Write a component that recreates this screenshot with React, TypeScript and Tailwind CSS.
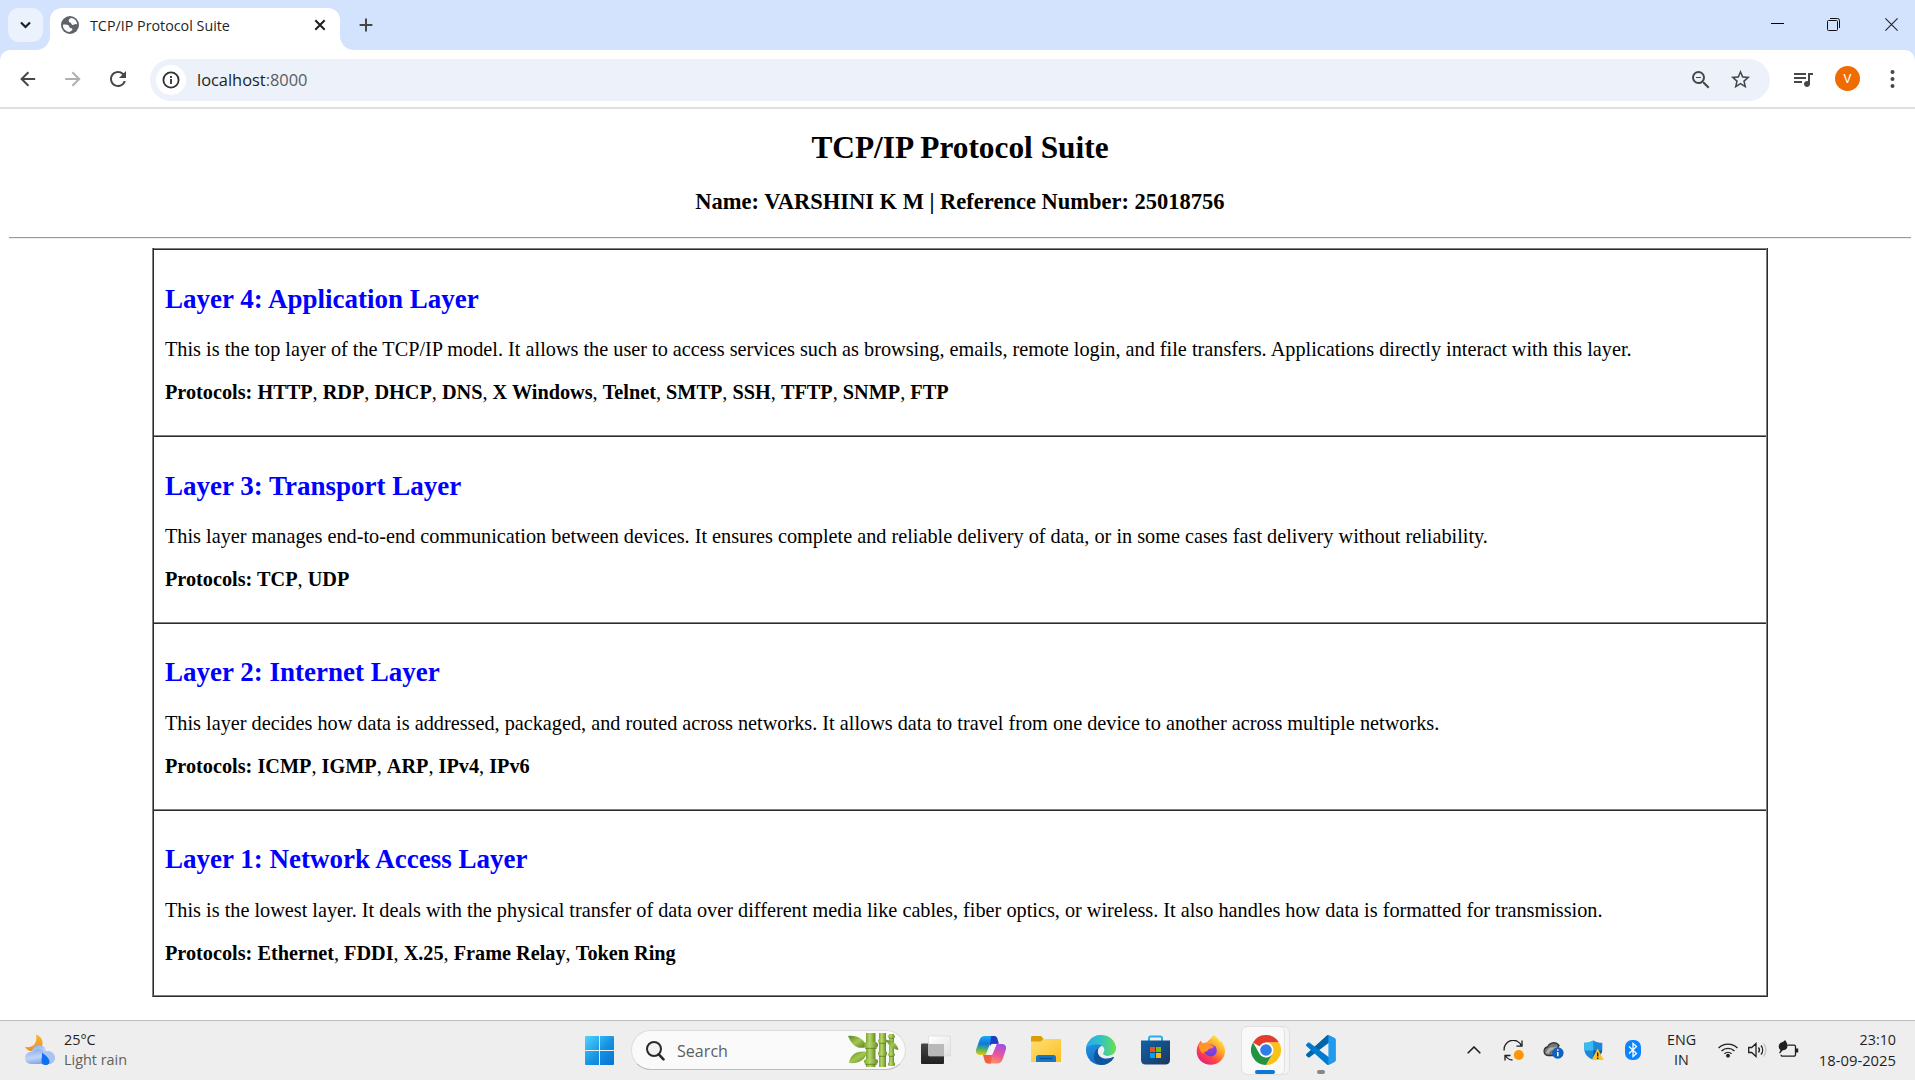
import React from "react";
import { MdQueueMusic, MdRefresh, MdStarBorder, MdZoomOut } from "react-icons/md";

const layers = [
  {
    title: "Layer 4: Application Layer",
    text: "This is the top layer of the TCP/IP model. It allows the user to access services such as browsing, emails, remote login, and file transfers. Applications directly interact with this layer.",
    protocols: ["HTTP", "RDP", "DHCP", "DNS", "X Windows", "Telnet", "SMTP", "SSH", "TFTP", "SNMP", "FTP"],
    size: "h-[187px]",
    heading: "pt-[34px] pb-[23px]",
  },
  {
    title: "Layer 3: Transport Layer",
    text: "This layer manages end-to-end communication between devices. It ensures complete and reliable delivery of data, or in some cases fast delivery without reliability.",
    protocols: ["TCP", "UDP"],
    size: "h-[187px]",
    heading: "pt-[34px] pb-[23px]",
  },
  {
    title: "Layer 2: Internet Layer",
    text: "This layer decides how data is addressed, packaged, and routed across networks. It allows data to travel from one device to another across multiple networks.",
    protocols: ["ICMP", "IGMP", "ARP", "IPv4", "IPv6"],
    size: "h-[187px]",
    heading: "pt-[33px] pb-[24px]",
  },
  {
    title: "Layer 1: Network Access Layer",
    text: "This is the lowest layer. It deals with the physical transfer of data over different media like cables, fiber optics, or wireless. It also handles how data is formatted for transmission.",
    protocols: ["Ethernet", "FDDI", "X.25", "Frame Relay", "Token Ring"],
    size: "h-[186px]",
    heading: "pt-[33px] pb-[24px]",
  },
];

function TabStrip() {
  return (
    <div className="flex h-[50px] items-start bg-[#d3e3fd]">
      <div className="ml-2 mt-2 flex h-[34px] w-[35px] items-center justify-center rounded-[11px] bg-[#ebf2fe]">
        <svg width="11" height="8" viewBox="0 0 11 8" fill="none" stroke="#1f1f1f" strokeWidth="2.2">
          <path d="M1 1.5 5.5 6 10 1.5" />
        </svg>
      </div>
      <div className="relative ml-[7px] mt-2 flex h-[42px] w-[290px] items-center rounded-t-[12px] bg-white pb-2 pl-[11px] pr-[14px]">
        <svg className="absolute bottom-0 left-[-14px]" width="14" height="14" viewBox="0 0 14 14">
          <path d="M14 0v14H0A14 14 0 0 0 14 0Z" fill="#fff" />
        </svg>
        <svg className="absolute bottom-0 right-[-14px]" width="14" height="14" viewBox="0 0 14 14">
          <path d="M0 0v14h14A14 14 0 0 1 0 0Z" fill="#fff" />
        </svg>
        <svg width="18" height="18" viewBox="0 0 18 18">
          <circle cx="9" cy="9" r="9" fill="#5f6368" />
          <path
            d="M10.8 1.900C8.800 2.200 7.600 3.200 7.700 4.800c.1 1.500 1.500 1.600 2.200 2.200.8.8.6 2 1.900 2 1.400 0 1.600-1 2.700-1 .9 0 1.300.6 1.700.8A7.300 7.300 0 0 0 10.800 1.900ZM1.800 8.700c2.200-.4 4.400-.3 5.600.5 1.200.9.5 2.400 1.900 2.700 1.200.2 2.200.2 2.100 1.500-.1 1.200-1.500 1.300-2.700 2.700A7.200 7.200 0 0 1 1.800 8.700Z"
            fill="#fff"
          />
        </svg>
        <span className="ml-[11px] pt-px text-[14.3px] leading-5 text-[#1f1f1f]">TCP/IP Protocol Suite</span>
        <svg className="ml-auto" width="12" height="12" viewBox="0 0 12 12" stroke="#1f1f1f" strokeWidth="2">
          <path d="m1.3 1.3 9.4 9.4m0-9.4-9.4 9.4" />
        </svg>
      </div>
      <svg className="ml-[19px] mt-[18px]" width="14" height="14" viewBox="0 0 14 14" stroke="#474747" strokeWidth="2">
        <path d="M7 .6v12.8M.6 7h12.8" />
      </svg>
      <div className="ml-auto flex items-center pt-[18px]">
        <svg width="13" height="13" viewBox="0 0 13 13" stroke="#000" strokeWidth="1">
          <path d="M0 5.5h13" />
        </svg>
        <svg className="ml-[43px]" width="13" height="13" viewBox="0 0 13 13" fill="none" stroke="#111" strokeWidth="1">
          <rect x=".5" y="2.5" width="10" height="10" rx="1" />
          <path d="M3 .5h7.5a2 2 0 0 1 2 2V10" />
        </svg>
        <svg className="ml-[45px] mr-[17px]" width="13" height="13" viewBox="0 0 13 13" stroke="#222" strokeWidth="1.1">
          <path d="m.4.4 12.2 12.2m0-12.2L.4 12.6" />
        </svg>
      </div>
    </div>
  );
}

function Toolbar() {
  return (
    <div className="bg-[#d3e3fd]">
      <div className="flex h-[57px] items-center rounded-t-[10px] bg-white">
        <svg className="ml-5" width="16" height="16" viewBox="0 0 16 16" fill="none" stroke="#474747" strokeWidth="2">
          <path d="M15.2 8H2M8.4 1.2 1.6 8l6.8 6.8" />
        </svg>
        <svg className="ml-[29px]" width="16" height="16" viewBox="0 0 16 16" fill="none" stroke="#b0b0b0" strokeWidth="2">
          <path d="M.2 8h13.6M7.4 1.2 14.2 8l-6.8 6.8" />
        </svg>
        <MdRefresh className="ml-[25px] size-6 text-[#474747]" />
        <div className="ml-5 mt-[2px] flex h-[42px] w-[1620px] items-center rounded-full bg-[#ecf1fa]">
          <div className="ml-[6px] flex size-[30px] items-center justify-center rounded-full bg-white">
            <svg width="18" height="18" viewBox="0 0 18 18" fill="none" stroke="#303030" strokeWidth="1.8">
              <circle cx="9" cy="9" r="7.6" />
              <path d="M9 8v5M9 5v1.9" />
            </svg>
          </div>
          <span className="ml-[11px] text-[16.4px] leading-6 text-[#1f1f1f]">
            localhost<span className="text-[#5a5d61]">:8000</span>
          </span>
          <MdZoomOut className="ml-auto size-6 text-[#474747]" />
          <MdStarBorder className="ml-4 mr-[18px] size-[23px] text-[#474747]" />
        </div>
        <MdQueueMusic className="ml-[21px] size-6 text-[#474747]" />
        <div className="ml-5 flex size-[25px] items-center justify-center rounded-full bg-[#ef6c00] font-[Roboto] text-[13px] text-white">
          V
        </div>
        <svg className="ml-[30px]" width="5" height="18" viewBox="0 0 5 18" fill="#474747">
          <circle cx="2.5" cy="2" r="2" />
          <circle cx="2.5" cy="9" r="2" />
          <circle cx="2.5" cy="16" r="2" />
        </svg>
      </div>
      <div className="h-[2px] bg-[#e0e0e0]" />
    </div>
  );
}

function Page() {
  return (
    <div className="h-[911px] bg-white pl-[9px] pr-1 pt-[21px] font-['Liberation_Serif',serif] text-black">
      <h1 className="text-center text-[31.35px] font-bold leading-9">TCP/IP Protocol Suite</h1>
      <h2 className="mt-[23px] text-center text-[22.5px] font-bold leading-[26px]">
        Name: VARSHINI K M | Reference Number: 25018756
      </h2>
      <div className="mt-[22px] border-b border-t border-b-[#eeeeee] border-t-[#9a9a9a]" />
      <div className="mx-auto mt-[9px] w-[1616px] border-b border-l border-r border-b-[#2b2b2b] border-l-[#808080] border-r-[#2b2b2b]">
        <div className="border-b border-l border-r border-b-[#808080] border-l-[#2b2b2b] border-r-[#808080]">
          {layers.map((layer) => (
            <section key={layer.title} className={`border-t border-t-[#808080] ${layer.size}`}>
              <div className="border-t border-t-[#2b2b2b] pl-[11px]">
                <h3 className={`text-[27px] font-bold leading-[30px] text-[#0000ff] ${layer.heading}`}>{layer.title}</h3>
                <p className="whitespace-nowrap text-[20.25px] leading-6">{layer.text}</p>
                <p className="mt-[19px] text-[20.25px] leading-6">
                  <b>Protocols: </b>
                  {layer.protocols.map((name, i) => (
                    <React.Fragment key={name}>
                      {i > 0 && ", "}
                      <b>{name}</b>
                    </React.Fragment>
                  ))}
                </p>
              </div>
            </section>
          ))}
        </div>
      </div>
    </div>
  );
}

function WeatherIcon() {
  return (
    <svg width="32" height="32" viewBox="0 0 32 32">
      <defs>
        <linearGradient id="moon" x1="0" y1="0" x2="0" y2="1">
          <stop offset="0" stopColor="#f4b93a" />
          <stop offset="1" stopColor="#ee8b1c" />
        </linearGradient>
        <linearGradient id="cloud" x1="0" y1="0" x2="0.3" y2="1">
          <stop offset="0" stopColor="#7fa6ec" />
          <stop offset=".6" stopColor="#c3d6f7" />
          <stop offset="1" stopColor="#86a9ea" />
        </linearGradient>
      </defs>
      <path d="M12 .5c4.500 1.500 7 5 6.500 9.500s-4 7.500-8.500 7.500c-4.500 0-7.500-2-9-4.500 5 .5 8-.5 9.700-3C12.500 7 12.600 4 12 .5Z" fill="url(#moon)" />
      <circle cx="15" cy="18" r="7.200" fill="url(#cloud)" />
      <path d="M7 30a6 6 0 1 1 1.500-11.800A8 8 0 0 1 21 18a6.500 6.500 0 1 1 3 12Z" fill="url(#cloud)" />
      <circle cx="25" cy="23.500" r="5.800" fill="#a9c3f3" />
      <path d="M18 18.500c4 3 7.500 6 7.500 9.200 0 2.500-1.700 3.300-4 3.300s-4-1-4-3.500c0-3 .8-5.500.5-9Z" fill="#0f6ff0" />
    </svg>
  );
}

function StartIcon() {
  return (
    <svg width="29" height="29" viewBox="0 0 29 29">
      <defs>
        <linearGradient id="win" x1="0" y1="0" x2="1" y2="1">
          <stop offset="0" stopColor="#4fd4ff" />
          <stop offset=".55" stopColor="#1691e0" />
          <stop offset="1" stopColor="#0572d4" />
        </linearGradient>
      </defs>
      <path d="M1 0h13v14H0V1a1 1 0 0 1 1-1ZM15 0h13a1 1 0 0 1 1 1v13H15ZM0 15h14v14H1a1 1 0 0 1-1-1ZM15 15h14v13a1 1 0 0 1-1 1H15Z" fill="url(#win)" />
    </svg>
  );
}

function BambooIcon() {
  return (
    <svg width="51" height="34" viewBox="0 0 51 34">
      <defs>
        <linearGradient id="stalk" x1="0" y1="0" x2="1" y2="0">
          <stop offset="0" stopColor="#7fa732" />
          <stop offset=".4" stopColor="#b9d76a" />
          <stop offset="1" stopColor="#648c25" />
        </linearGradient>
        <linearGradient id="leaf" x1="0" y1="0" x2="1" y2="1">
          <stop offset="0" stopColor="#5c8822" />
          <stop offset=".5" stopColor="#a3c750" />
          <stop offset="1" stopColor="#55801f" />
        </linearGradient>
      </defs>
      <path d="M0 3C9 2 17 6 18 14 9 17 4 12 0 3Z" fill="url(#leaf)" />
      <path d="M1 30c1-8 8-13 18-11-1 8-9 12-18 11Z" fill="url(#leaf)" />
      <path d="M18 0h9.500v34H18z" fill="url(#stalk)" />
      <path d="M31 0h7v34h-7z" fill="url(#stalk)" />
      <path d="M41 1h5v32h-5z" fill="url(#stalk)" />
      <rect x="16" y="9" width="14" height="6" rx="3" fill="url(#stalk)" />
      <rect x="16" y="26" width="14" height="5" rx="2.500" fill="url(#stalk)" />
      <rect x="30" y="6" width="9" height="4" rx="2" fill="url(#stalk)" />
      <rect x="30" y="18" width="9" height="5" rx="2" fill="url(#stalk)" />
      <rect x="40" y="2" width="7" height="3" rx="1.500" fill="url(#stalk)" />
      <rect x="40" y="20" width="7" height="3" rx="1.500" fill="url(#stalk)" />
      <rect x="40" y="29" width="7" height="4" rx="1.500" fill="url(#stalk)" />
      <path d="M17 15.300h12M17 31.300h12M31 10.300h7M31 23.300h7M41 5.300h5M41 23.300h5" stroke="#587d1e" strokeWidth=".8" />
      <path d="M38 7c7 0 11 4 12.500 10-6-1-10-4-12.500-10Z" fill="url(#leaf)" />
    </svg>
  );
}

function TaskViewIcon() {
  return (
    <svg width="30" height="30" viewBox="0 0 30 30">
      <defs>
        <linearGradient id="tvd" x1="0" y1="0" x2="0" y2="1">
          <stop offset="0" stopColor="#484848" />
          <stop offset="1" stopColor="#202020" />
        </linearGradient>
        <linearGradient id="tvl" x1="0" y1="0" x2="1" y2="1">
          <stop offset="0" stopColor="#fff" />
          <stop offset="1" stopColor="#e2e2e2" />
        </linearGradient>
      </defs>
      <rect x="0" y="8.500" width="23" height="20.500" rx="1" fill="url(#tvd)" />
      <rect x="7.500" y="1" width="22" height="20" rx="1" fill="url(#tvl)" stroke="#d4d4d4" strokeWidth=".6" />
      <path d="M8 9h15v12H8z" fill="#b9b9b9" />
    </svg>
  );
}

function CopilotIcon() {
  return (
    <svg width="30" height="28" viewBox="0 0 30 28">
      <defs>
        <linearGradient id="cpa" x1="0.300" y1="0" x2="0.200" y2="1">
          <stop offset="0" stopColor="#19a9f5" />
          <stop offset=".4" stopColor="#1277d8" />
          <stop offset=".7" stopColor="#4fb469" />
          <stop offset="1" stopColor="#efc60d" />
        </linearGradient>
        <linearGradient id="cpb" x1="0.700" y1="0" x2="0.300" y2="1">
          <stop offset="0" stopColor="#a04fe6" />
          <stop offset=".5" stopColor="#e9559c" />
          <stop offset="1" stopColor="#ff9a5c" />
        </linearGradient>
      </defs>
      <path d="M9 0h8.500c2 0 3 1 3.600 3l1.400 5H17l-3 0L9.500 19H4c-3.500 0-4.800-2.600-3.700-6L3.500 4C4.500 1.300 6 0 9 0Z" fill="url(#cpa)" />
      <path d="M15 0h3c2 0 3 1 3.500 3l1.300 4.500h-5c-2 0-3.300 1-4 3Z" fill="#1b3fc4" />
      <path d="M21 27.500h-8.500c-2 0-3-1-3.600-3L7.500 19H13l3.500-1L20.500 8H26c3.500 0 4.800 2.600 3.700 6l-3.200 9.500c-1 2.700-2.500 4-5.500 4Z" fill="url(#cpb)" />
      <path d="M15 27.500h-3c-2 0-3-1-3.500-3L7 19h5c2 0 3.300-1 4-3Z" fill="#f0583c" opacity=".85" />
      <path d="M17.500 8h3.200L16 19h-4.200l3.200-8.500C15.600 8.800 16.400 8 17.500 8Z" fill="#f2f4fa" />
    </svg>
  );
}

function FolderIcon() {
  return (
    <svg width="30" height="28" viewBox="0 0 30 28">
      <defs>
        <linearGradient id="fold" x1="0" y1="0" x2="1" y2="1">
          <stop offset="0" stopColor="#ffdf75" />
          <stop offset="1" stopColor="#fbbf24" />
        </linearGradient>
      </defs>
      <path d="M0 1.500C0 .7.500 0 1.300 0H9c1 0 1.500.4 2 1l1.500 2H13v4H0Z" fill="#dd9c05" />
      <path d="M0 5.500h8.500c1.500 0 2.500-.5 3.500-2.500h17c.6 0 1 .4 1 1v22H0Z" fill="url(#fold)" />
      <path d="M5 26v-4.500A2.500 2.500 0 0 1 7.500 19h15a2.500 2.500 0 0 1 2.500 2.500V26Z" fill="#1478c8" />
      <path d="M8.500 22.500h13" stroke="#094f8d" strokeWidth="1.300" />
    </svg>
  );
}

function EdgeIcon() {
  return (
    <svg width="30" height="30" viewBox="0 0 24 24">
      <defs>
        <linearGradient id="eda" x1="0" y1="0.300" x2="1" y2="0.300">
          <stop offset="0" stopColor="#2aa9e8" />
          <stop offset=".5" stopColor="#33c4c4" />
          <stop offset="1" stopColor="#6be04a" />
        </linearGradient>
        <linearGradient id="edb" x1="0" y1="0" x2="0.500" y2="1">
          <stop offset="0" stopColor="#2aa6e8" />
          <stop offset="1" stopColor="#0b63c4" />
        </linearGradient>
      </defs>
      <path d="M12 0a12 12 0 1 0 10.300 18.100c.3-.6-.3-.9-.8-.7-1.500.7-3 1-4.500 1L24 10Z" fill="url(#edb)" />
      <path d="M22.200 18.200A12 12 0 0 1 12.500 24C8 23.500 6 20 6.500 16c.4-3 2.200-5 4-6-1.800 3-.8 6.500 1.700 8.200 3 2 6.500 1.500 9.500-.2Z" fill="#0f549d" />
      <path d="M.2 10C1.500 3.800 6.500 0 12 0c7 0 12 5 12 10.500 0 3.800-3 6-6.500 6-2.500 0-3.700-1-3.700-1.800 0-.7 1-1 1-2.900 0-2.200-2.300-4.300-5.800-4.300C5 7.500 1.500 8.500.2 10Z" fill="url(#eda)" />
      <path d="M13.800 14.700c0-.7 1-1 1-2.900 0-1.200-.8-2.400-2.200-3.200-2 .8-3.500 2.800-3.100 5.400.4 2.700 3 4.800 6.500 4.800 2.500 0 4.500-.8 6.200-1.400l2-1.400v-2c-1.500 1.800-4 2.500-6.700 2.500-2.500 0-3.700-1-3.700-1.800Z" fill="#eee" />
    </svg>
  );
}

function StoreIcon() {
  return (
    <svg width="30" height="30" viewBox="0 0 30 30">
      <defs>
        <linearGradient id="sto" x1="0" y1="0" x2="1" y2="1">
          <stop offset="0" stopColor="#0f64a8" />
          <stop offset="1" stopColor="#1d355e" />
        </linearGradient>
      </defs>
      <path d="M8 6V3.200C8 2.300 8.600 1.500 9.700 1.500h9.600c1.100 0 1.700.8 1.700 1.700V6" fill="none" stroke="#27b1ec" strokeWidth="2" />
      <path d="M0 5.500h29V25c0 3-2 4.500-4.500 4.500h-20C2 29.500 0 28 0 25Z" fill="url(#sto)" />
      <path d="M9 12h5v5H9z" fill="#f25022" />
      <path d="M15 12h5v5h-5z" fill="#7fba00" />
      <path d="M9 18h5v5H9z" fill="#00a4ef" />
      <path d="M15 18h5v5h-5z" fill="#ffb900" />
    </svg>
  );
}

function FirefoxIcon() {
  return (
    <svg width="30" height="30" viewBox="0 0 30 30">
      <defs>
        <linearGradient id="ffa" x1="0.900" y1="0.100" x2="0.200" y2="1">
          <stop offset="0" stopColor="#fff04a" />
          <stop offset=".35" stopColor="#ffa62b" />
          <stop offset=".65" stopColor="#ff4a3f" />
          <stop offset="1" stopColor="#e5158c" />
        </linearGradient>
        <radialGradient id="ffb" cx=".6" cy=".3" r=".8">
          <stop offset="0" stopColor="#a03ce8" />
          <stop offset="1" stopColor="#5b42d6" />
        </radialGradient>
      </defs>
      <path d="M17.500 0c3 1.500 5.500 4.500 6.500 7l.5-1.500C27 8 29 12 29 16c0 8-6.500 13.700-14.300 13.700S.7 24 .7 16.500C.7 12 2.500 8 5 5.500L6 8.500c2-1 3.500-1.300 5-1 1-2.500 4.500-4 6.500-7.500Z" fill="url(#ffa)" />
      <circle cx="14.800" cy="15.500" r="6" fill="url(#ffb)" />
      <path d="M3 9c3-1.500 7-1.500 10 .5l5 1.500c-.5 2-2.500 2.200-4.500 2.800-1.500.5-1.500 2-3 2.700-2-.3-3.500.5-3 2.500C4.500 17 2.500 13 3 9Z" fill="#ff9429" />
    </svg>
  );
}

function ChromeIcon() {
  return (
    <svg width="30" height="30" viewBox="0 0 48 48">
      <path d="M24 24 3.200 12A24 24 0 0 1 44.800 12H24Z" fill="#e33b2e" />
      <path d="M44.800 12A24 24 0 0 1 24 48L34.400 30 24 12Z" fill="#fbc116" />
      <path d="M24 48A24 24 0 0 1 3.200 12L13.600 30 24 36l10.400-6Z" fill="#229342" />
      <circle cx="24" cy="24" r="12" fill="#fff" />
      <circle cx="24" cy="24" r="9.300" fill="#2f7de9" />
    </svg>
  );
}

function VsCodeIcon() {
  return (
    <svg width="30" height="30" viewBox="0 0 100 100">
      <path d="M96 10.800 75.500.9a6.200 6.200 0 0 0-7.100 1.200L1.300 63.200a4.200 4.200 0 0 0 0 6.100l5.500 5a4.200 4.200 0 0 0 5.300.2L93 13.200a4.100 4.100 0 0 1 6.600 3.300Z" fill="#0065a9" />
      <path d="M96 89.200 75.500 99.100a6.200 6.200 0 0 1-7.100-1.200L1.300 36.800a4.200 4.200 0 0 1 0-6.100l5.500-5a4.200 4.200 0 0 1 5.300-.2L93 86.800a4.100 4.100 0 0 0 6.600-3.300Z" fill="#007acc" />
      <path d="M75.500 99.100a6.200 6.200 0 0 1-7.100-1.200c2.300 2.300 6.300.7 6.300-2.600V4.700c0-3.300-4-4.900-6.300-2.600A6.200 6.200 0 0 1 75.500.9l20.600 9.900A6.300 6.300 0 0 1 99.600 16.400v67.200a6.300 6.300 0 0 1-3.500 5.600Z" fill="#1f9cf0" />
    </svg>
  );
}

function AppCell({ children }: { children: React.ReactNode }) {
  return <div className="flex h-[60px] w-[55px] items-center justify-center">{children}</div>;
}

function Taskbar() {
  return (
    <div className="flex h-[60px] items-center bg-[#eeeeee] shadow-[inset_0_1px_0_#bdbdbd]">
      <div className="flex w-[585px] items-center pl-6">
        <WeatherIcon />
        <div className="ml-2 text-[14.4px] leading-5">
          <div className="text-[#1f1f1f]">25°C</div>
          <div className="text-[#606060]">Light rain</div>
        </div>
      </div>
      <StartIcon />
      <div className="ml-[17px] flex h-10 w-[275px] items-center rounded-full border border-[#dddddd] border-b-[#bdbdbd] bg-[#fafafa] pl-[14px] pr-[6px]">
        <svg className="mt-px" width="19" height="20" viewBox="0 0 19 20" fill="none" stroke="#2a2a2a">
          <circle cx="8" cy="8" r="7" strokeWidth="2" fill="#f2f2f2" />
          <path d="m12.800 13.300 4.700 5" strokeWidth="2.600" strokeLinecap="round" />
        </svg>
        <span className="ml-3 pt-px text-[16.1px] leading-6 text-[#606060]">Search</span>
        <div className="ml-auto">
          <BambooIcon />
        </div>
      </div>
      <div className="ml-[2px] flex">
        <AppCell>
          <TaskViewIcon />
        </AppCell>
        <AppCell>
          <CopilotIcon />
        </AppCell>
        <AppCell>
          <FolderIcon />
        </AppCell>
        <AppCell>
          <EdgeIcon />
        </AppCell>
        <AppCell>
          <StoreIcon />
        </AppCell>
        <AppCell>
          <FirefoxIcon />
        </AppCell>
        <AppCell>
          <div className="relative flex h-[49px] w-[49px] items-center rounded-[6px] border border-[#e0e0e0] bg-[#f4f4f4]">
            <div className="-ml-px flex h-[49px] w-[44px] items-center rounded-[6px] border border-[#e2e2e2] bg-[#f9f9f9] pl-[9px]">
              <div className="shrink-0">
                <ChromeIcon />
              </div>
            </div>
            <div className="absolute bottom-0 left-[13px] h-1 w-5 rounded-full bg-[#0a78d4]" />
          </div>
        </AppCell>
        <AppCell>
          <div className="relative">
            <VsCodeIcon />
            <div className="absolute bottom-[-9px] left-[11px] h-1 w-2 rounded-full bg-[#868686]" />
          </div>
        </AppCell>
      </div>
      <div className="ml-auto flex items-center pr-[19px]">
        <svg width="14" height="8" viewBox="0 0 14 8" fill="none" stroke="#1f1f1f" strokeWidth="1.600">
          <path d="M.7 7.200 7 1l6.300 6.200" />
        </svg>
        <svg className="ml-[22px]" width="21" height="21" viewBox="0 0 21 21" fill="none" stroke="#1f1f1f" strokeWidth="1.300">
          <path d="M1.200 10.500A9 9 0 0 1 18.500 6M19 .5v5.700h-5.500M2 20.500v-5h5.500M2.500 16c1.500 2.200 4 3.800 7 4" />
          <circle cx="15.800" cy="15" r="5" fill="#ff9500" stroke="none" />
        </svg>
        <svg className="ml-[19px]" width="21" height="18" viewBox="0 0 21 18">
          <path d="M5 14.500A4.300 4.300 0 0 1 4.600 6 6.500 6.500 0 0 1 16 4.500l-6 10Z" fill="#777" stroke="#333" strokeWidth="1.300" />
          <path d="M4.500 12.500C5 9 8 7 11 8l3-1.500" stroke="#b0b0b0" strokeWidth="3" fill="none" />
          <circle cx="14.800" cy="12" r="5.800" fill="#0f63bd" />
          <path d="M14.800 11v4.200M14.800 8.300v1.500" stroke="#fff" strokeWidth="1.500" />
        </svg>
        <svg className="ml-[20px]" width="20" height="21" viewBox="0 0 20 21">
          <path d="M9.300.5C12 2.200 15 2.800 18.300 2.800V9c0 5-3.500 8.500-9 11-5.500-2.500-9-6-9-11V2.800C3.500 2.800 6.500 2.200 9.300.5Z" fill="#1b87d6" />
          <path d="M9.300.5v10H.3V2.800C3.500 2.800 6.500 2.200 9.300.5Z" fill="#35bdf2" />
          <path d="M9.300 10.500h9C17.500 15 14 18 9.300 20Z" fill="#0f5cad" />
          <path d="M13.700 8.500 19.700 20H7.700Z" fill="#ffc423" />
          <path d="M13.700 12.500v4M13.700 17.500V19" stroke="#222" strokeWidth="1.400" />
        </svg>
        <svg className="ml-[21px]" width="16" height="20" viewBox="0 0 16 20">
          <rect width="16" height="20" rx="7" fill="#0a84ff" />
          <path d="m4 6.500 7.500 7L8 16.500v-13l3.500 3-7.500 7" fill="none" stroke="#fff" strokeWidth="1.300" />
        </svg>
        <div className="ml-[26px] w-[29px] text-center text-[14.3px] leading-5 text-[#1f1f1f]">
          <div>ENG</div>
          <div>IN</div>
        </div>
        <svg className="ml-[22px]" width="20" height="16" viewBox="0 0 20 16" fill="none" stroke="#1f1f1f" strokeWidth="1.400">
          <path d="M.6 6a13.300 13.300 0 0 1 18.800 0M3.600 9a9 9 0 0 1 12.800 0M6.500 11.800a5 5 0 0 1 7 0" />
          <circle cx="10" cy="13.700" r="1.200" fill="#1f1f1f" />
        </svg>
        <svg className="ml-[10px]" width="20" height="16" viewBox="0 0 20 16" fill="none" stroke="#1f1f1f" strokeWidth="1.300">
          <path d="M.7 5.500h3L8 1.500v13l-4.300-4h-3ZM10.500 5.500a4 4 0 0 1 0 5M13 3.500a7 7 0 0 1 0 9" />
          <path d="M15.500 1.500a10 10 0 0 1 0 13" stroke="#c4c4c4" />
        </svg>
        <svg className="mb-[2px] ml-[10px]" width="21" height="18" viewBox="0 0 21 18">
          <path d="M9.500 5.200H16a1.500 1.500 0 0 1 1.500 1.500v8a1.500 1.500 0 0 1-1.500 1.500H4.500A1.500 1.500 0 0 1 3 14.700" fill="none" stroke="#1f1f1f" strokeWidth="1.300" />
          <path d="M18 8.500h2.200v4H18z" fill="#1f1f1f" />
          <path d="M7 0c2.200 2.800 3 5.200 2.200 7.500-.7 1.900-2.400 2.900-4.500 2.700L2 13.500l-.8-.6 1.300-3C-.2 7.800.2 4.500 2.800 2.800 4.500 2 6 1.500 7 0Z" fill="#1f1f1f" />
        </svg>
        <div className="ml-[19px] w-[78px] text-right text-[14.8px] leading-5 text-[#1f1f1f]">
          <div className="text-[14.3px]">23:10</div>
          <div className="whitespace-nowrap">18-09-2025</div>
        </div>
      </div>
    </div>
  );
}

export default function App() {
  return (
    <div className="h-[1080px] w-[1915px] overflow-hidden bg-white font-['Open_Sans',sans-serif]">
      <TabStrip />
      <Toolbar />
      <Page />
      <Taskbar />
    </div>
  );
}
